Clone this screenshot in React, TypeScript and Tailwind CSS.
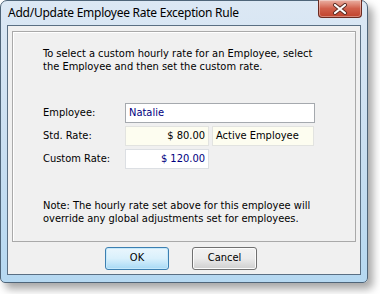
import React from 'react';

const ui = { fontFamily: '"DejaVu Sans Condensed", "DejaVu Sans", sans-serif' };
const title = { fontFamily: '"Noto Sans", "Open Sans", sans-serif' };

function CloseButton() {
  return (
    <div className="w-[44px] h-[18px] rounded-b-[4px] border border-t-0 border-[#6b2a20] bg-gradient-to-b from-[#eab1a5] via-[#d1604c] to-[#c0432c] flex items-center justify-center shadow-[inset_0_0_0_1px_rgba(255,255,255,0.35)]">
      <svg width="16" height="12" viewBox="0 0 16 12">
        <path d="M3 2 L13 10 M13 2 L3 10" stroke="#5a2a22" strokeWidth="4" strokeLinecap="round" />
        <path d="M3 2 L13 10 M13 2 L3 10" stroke="#ffffff" strokeWidth="2.2" strokeLinecap="round" />
      </svg>
    </div>
  );
}

function Field({ value, align = 'left', color = 'text-black', bg = 'bg-white', border = 'border-[#dcdfe3]', className = '' }: {
  value: string; align?: 'left' | 'right'; color?: string; bg?: string; border?: string; className?: string;
}) {
  return (
    <div className={`h-[20px] border ${border} ${bg} ${color} px-[3px] flex items-center ${align === 'right' ? 'justify-end' : 'justify-start'} ${className}`}>
      {value}
    </div>
  );
}

export default function App() {
  return (
    <div className="w-[380px] h-[294px] bg-white relative overflow-hidden">
      <div className="w-[368px] h-[283px] rounded-t-[7px] rounded-b-[5px] border border-[#4f6579] bg-gradient-to-b from-[#dce8f4] via-[#cadff1] to-[#b5d8f1] shadow-[5px_6px_9px_rgba(0,0,0,0.35)] flex flex-col px-[6px] pb-[7px]">
        {/* Title bar */}
        <div className="h-[24px] flex items-start justify-between">
          <span className="pt-[3px] pl-[1px] text-[12px] text-black tracking-[-0.25px]" style={title}>
            Add/Update Employee Rate Exception Rule
          </span>
          <div className="-mt-px mr-[-1px]">
            <CloseButton />
          </div>
        </div>

        {/* Client area */}
        <div className="flex-1 bg-[#f0f0f0] border border-[#5a6f83] flex flex-col px-[4px] pt-[5px] text-[11px] text-black" style={ui}>
          <div className="h-[211px] border border-[#a9a9a9] shadow-[inset_1px_1px_0_#ffffff] pl-[30px] pt-[15px] flex flex-col">
            <p className="leading-[13px]">
              To select a custom hourly rate for an Employee, select<br />
              the Employee and then set the custom rate.
            </p>

            <div className="mt-[30px] grid grid-cols-[82px_84px_auto] gap-y-[3px] items-center">
              <span>Employee:</span>
              <Field value="Natalie" color="text-[#000080]" border="border-[#a5a9ae]" className="col-span-2 w-[190px]" />

              <span>Std. Rate:</span>
              <Field value="$ 80.00" align="right" bg="bg-[#fdfdf0]" border="border-[#e2e3e0]" />
              <Field value="Active Employee" bg="bg-[#fdfdf0]" border="border-[#e2e3e0]" className="ml-[3px] w-[102px]" />

              <span>Custom Rate:</span>
              <Field value="$ 120.00" align="right" color="text-[#000080]" border="border-[#dcdfe3]" />
            </div>

            <p className="mt-[30px] leading-[13px]">
              Note: The hourly rate set above for this employee will<br />
              override any global adjustments set for employees.
            </p>
          </div>

          <div className="flex justify-center gap-[23px] mt-[5px] pr-[6px]">
            <button className="w-[64px] h-[23px] rounded-[3px] border border-[#3c7fb1] bg-gradient-to-b from-[#eaf6fd] via-[#d9f0fc] to-[#a7d9f5] shadow-[inset_0_0_0_1px_#c6e9fb]">
              OK
            </button>
            <button className="w-[65px] h-[23px] rounded-[3px] border border-[#707070] bg-gradient-to-b from-[#f2f2f2] via-[#ebebeb] to-[#cfcfcf] shadow-[inset_0_0_0_1px_#fcfcfc]">
              Cancel
            </button>
          </div>
        </div>
      </div>
    </div>
  );
}
